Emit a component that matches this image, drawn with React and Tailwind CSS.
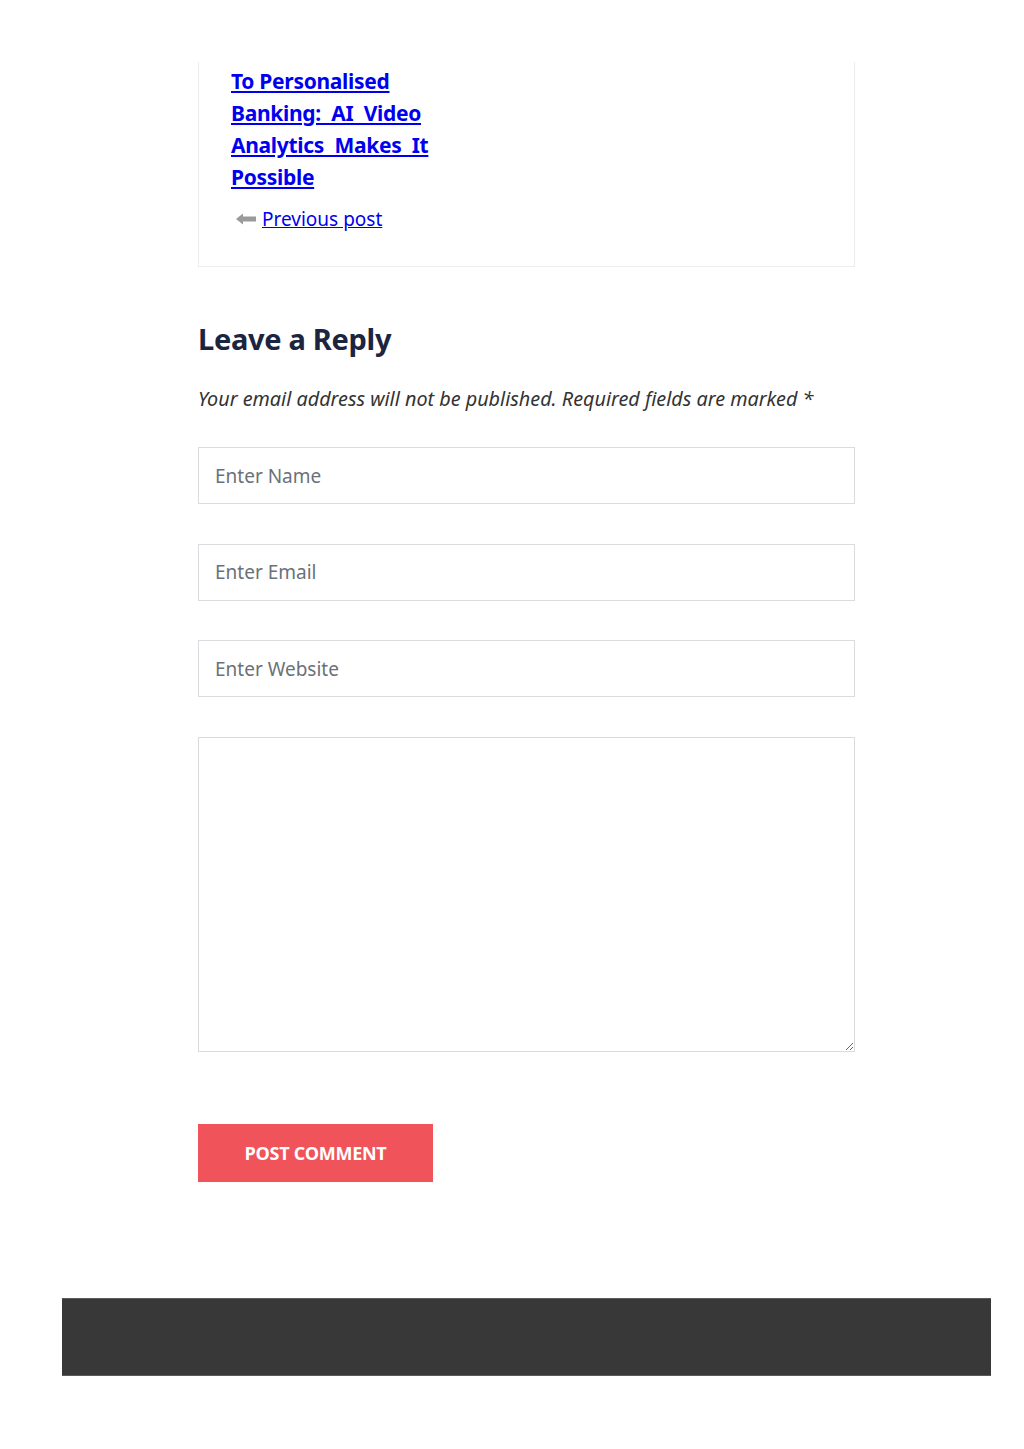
import React from 'react'

const font = { fontFamily: '"Noto Sans", "Open Sans", sans-serif' }

function ArrowLeft(){
  return (
    <svg width="20" height="12" viewBox="0 0 20 12" className="shrink-0">
      <path d="M0 6 L7 0.5 L7 3.5 L20 3.5 L20 8.5 L7 8.5 L7 11.5 Z" fill="#9a9a9a" />
    </svg>
  )
}

function Field({ placeholder }){
  return (
    <input
      type="text"
      placeholder={placeholder}
      className="block w-full h-[57px] border border-[#d9dbde] bg-white px-[16px] text-[19px] text-[#333] placeholder:text-[#6b7178] outline-none"
    />
  )
}

export default function App(){
  return (
    <div className="min-h-[1449px] bg-white" style={font}>
      <div className="ml-[62px] w-[929px] pt-[62px]">
        <div className="px-[136px]">
          {/* post navigation card */}
          <div className="border-x border-b border-[#ececec] pl-[32px] pt-[3px] pb-[34px]">
            <a href="#" className="block w-[200px] text-[21px] font-bold leading-[32px] text-[#0000ee] underline tracking-[-0.3px]">
              To Personalised Banking:&nbsp; AI&nbsp; Video Analytics&nbsp; Makes&nbsp; It Possible
            </a>
            <div className="mt-[13px] flex items-center gap-[6px] pl-[5px]">
              <ArrowLeft />
              <a href="#" className="text-[19px] leading-[26px] text-[#0000ee] underline">Previous post</a>
            </div>
          </div>

          {/* reply form */}
          <h2 className="mt-[52px] text-[29px] font-bold leading-[40px] text-[#1b2540] tracking-[-0.3px]">Leave a Reply</h2>
          <p className="mt-[26px] text-[19.8px] italic leading-[28px] text-[#333]">
            Your email address will not be published. Required fields are marked *
          </p>

          <form className="mt-[34px] flex flex-col gap-[39.5px]" onSubmit={e => e.preventDefault()}>
            <Field placeholder="Enter Name" />
            <Field placeholder="Enter Email" />
            <Field placeholder="Enter Website" />
            <textarea className="block w-full h-[315px] border border-[#d9dbde] bg-white p-[16px] text-[19px] outline-none" />
            <div className="pt-[33px]">
              <button type="submit" className="h-[58px] w-[235px] bg-[#f0535a] text-[18px] font-bold uppercase text-white tracking-[-0.3px]" style={{ fontFamily: '"Open Sans", sans-serif' }}>
                Post Comment
              </button>
            </div>
          </form>
        </div>

        {/* footer */}
        <div className="mt-[116px] h-[78px] border-y border-[#5a5a5a] bg-[#383838]" />
      </div>
    </div>
  )
}
